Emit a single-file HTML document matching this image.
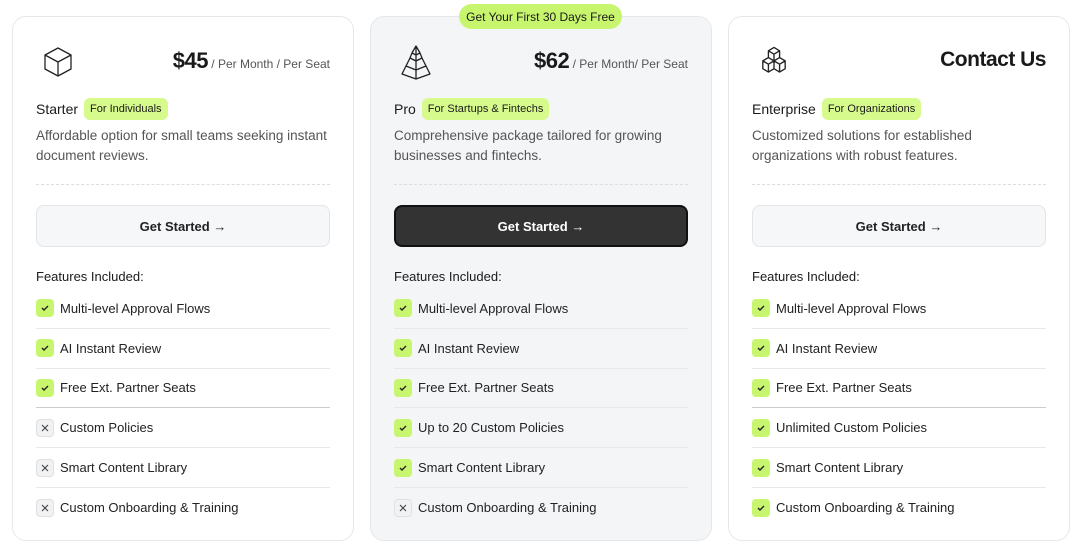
<!DOCTYPE html>
<html><head><meta charset="utf-8"><style>
*{box-sizing:border-box;margin:0;padding:0}
body{width:1070px;height:553px;background:#fff;font-family:"Liberation Sans",sans-serif;color:#1a1a1a;position:relative;overflow:hidden}
.card{position:absolute;top:16px;width:342px;height:525px;border:1px solid #e6e7ea;border-radius:14px;background:#fff;padding:0 23px}
.card.pro{background:#f4f5f7}
.icon{position:absolute;left:28px;top:28px;width:34px;height:34px}
.price{position:absolute;right:23px;top:31px;font-size:22px;font-weight:bold;letter-spacing:-0.5px}
.price span{font-size:12px;font-weight:normal;color:#555;letter-spacing:0}
.title{position:absolute;left:23px;top:81px;font-size:14px;display:flex;align-items:center;gap:6px}
.tag{background:#d6fb8c;border-radius:6px;font-size:11px;padding:5px 6px}
.desc{position:absolute;left:23px;top:109px;width:292px;font-size:13.5px;line-height:19.5px;color:#555}
.dash{position:absolute;left:23px;right:23px;top:167px;border-top:1px dashed #ddd}
.btn{position:absolute;left:23px;right:23px;top:188px;height:42px;border:1px solid #e3e4e7;border-radius:8px;background:#f6f7f9;font-size:13px;font-weight:bold;display:flex;align-items:center;justify-content:center;color:#222}
.pro .btn{background:#333;border:2px solid #111;color:#fff}
.feat{position:absolute;left:23px;top:252px;font-size:13px}
.list{position:absolute;left:23px;right:23px;top:272px}
.row{height:39.8px;display:flex;align-items:center;font-size:13px;border-bottom:1px solid #e8e8ea;color:#222}
.row:last-child{border-bottom:none}
.ck{width:18px;height:18px;border-radius:4px;background:#c8f56e;margin-right:6px;display:flex;align-items:center;justify-content:center}
.x{background:#f1f2f4;border:1px solid #e0e0e0}
.badge{position:absolute;left:459px;top:4px;width:163px;height:25px;border-radius:13px;background:#c8f56e;font-size:12px;display:flex;align-items:center;justify-content:center;z-index:2}
</style></head><body>
<div class="badge">Get Your First 30 Days Free</div>

<div class="card" style="left:12px">
<svg class="icon" viewBox="0 0 34 34" fill="none" stroke="#222" stroke-width="1.3" stroke-linejoin="round"><path d="M17 3L30 10V24L17 31L4 24V10Z M4 10L17 17L30 10 M17 17V31"/></svg>
<div class="price">$45<span> / Per Month / Per Seat</span></div>
<div class="title">Starter <span class="tag">For Individuals</span></div>
<div class="desc">Affordable option for small teams seeking instant document reviews.</div>
<div class="dash"></div>
<div class="btn">Get Started →</div>
<div class="feat">Features Included:</div>
<div class="list">
<div class="row"><span class="ck"><svg width="10" height="10" viewBox="0 0 10 10"><path d="M2 5l2 2 4-4" stroke="#222" stroke-width="1.4" fill="none"/></svg></span>Multi-level Approval Flows</div>
<div class="row"><span class="ck"><svg width="10" height="10" viewBox="0 0 10 10"><path d="M2 5l2 2 4-4" stroke="#222" stroke-width="1.4" fill="none"/></svg></span>AI Instant Review</div>
<div class="row" style="border-color:#ccc"><span class="ck"><svg width="10" height="10" viewBox="0 0 10 10"><path d="M2 5l2 2 4-4" stroke="#222" stroke-width="1.4" fill="none"/></svg></span>Free Ext. Partner Seats</div>
<div class="row"><span class="ck x"><svg width="10" height="10" viewBox="0 0 10 10"><path d="M2 2l6 6M8 2l-6 6" stroke="#444" stroke-width="1.1"/></svg></span>Custom Policies</div>
<div class="row"><span class="ck x"><svg width="10" height="10" viewBox="0 0 10 10"><path d="M2 2l6 6M8 2l-6 6" stroke="#444" stroke-width="1.1"/></svg></span>Smart Content Library</div>
<div class="row"><span class="ck x"><svg width="10" height="10" viewBox="0 0 10 10"><path d="M2 2l6 6M8 2l-6 6" stroke="#444" stroke-width="1.1"/></svg></span>Custom Onboarding &amp; Training</div>
</div></div>

<div class="card pro" style="left:370px">
<svg class="icon" viewBox="0 0 34 34" fill="none" stroke="#222" stroke-width="1.3" stroke-linejoin="round" style="top:24px;height:40px"><path d="M17 2L13 9L17 11L21 9Z M17 2V11 M13 9L11 14L17 17L23 14L21 9 M17 11V17 M11 14L7 22L17 26L27 22L23 14 M17 17V26 M7 22L3 30L17 35L31 30L27 22 M17 26V35"/></svg>
<div class="price">$62<span> / Per Month/ Per Seat</span></div>
<div class="title">Pro <span class="tag">For Startups &amp; Fintechs</span></div>
<div class="desc">Comprehensive package tailored for growing businesses and fintechs.</div>
<div class="dash"></div>
<div class="btn">Get Started →</div>
<div class="feat">Features Included:</div>
<div class="list">
<div class="row"><span class="ck"><svg width="10" height="10" viewBox="0 0 10 10"><path d="M2 5l2 2 4-4" stroke="#222" stroke-width="1.4" fill="none"/></svg></span>Multi-level Approval Flows</div>
<div class="row"><span class="ck"><svg width="10" height="10" viewBox="0 0 10 10"><path d="M2 5l2 2 4-4" stroke="#222" stroke-width="1.4" fill="none"/></svg></span>AI Instant Review</div>
<div class="row"><span class="ck"><svg width="10" height="10" viewBox="0 0 10 10"><path d="M2 5l2 2 4-4" stroke="#222" stroke-width="1.4" fill="none"/></svg></span>Free Ext. Partner Seats</div>
<div class="row"><span class="ck"><svg width="10" height="10" viewBox="0 0 10 10"><path d="M2 5l2 2 4-4" stroke="#222" stroke-width="1.4" fill="none"/></svg></span>Up to 20 Custom Policies</div>
<div class="row"><span class="ck"><svg width="10" height="10" viewBox="0 0 10 10"><path d="M2 5l2 2 4-4" stroke="#222" stroke-width="1.4" fill="none"/></svg></span>Smart Content Library</div>
<div class="row"><span class="ck x"><svg width="10" height="10" viewBox="0 0 10 10"><path d="M2 2l6 6M8 2l-6 6" stroke="#444" stroke-width="1.1"/></svg></span>Custom Onboarding &amp; Training</div>
</div></div>

<div class="card" style="left:728px">
<svg class="icon" viewBox="0 0 34 34" fill="none" stroke="#222" stroke-width="1.2" stroke-linejoin="round" style="left:26px;top:26px;width:38px;height:38px"><path d="M17 4L22 7V13L17 16L12 13V7Z M12 7L17 10L22 7 M17 10V16 M12 13L7 16V23L12 26L17 23V16 M7 16L12 19L17 16 M12 19V26 M22 13L27 16V23L22 26L17 23 M17 16L22 19L27 16 M22 19V26"/></svg>
<div class="price" style="font-weight:bold;font-size:21px">Contact Us</div>
<div class="title">Enterprise <span class="tag">For Organizations</span></div>
<div class="desc" style="width:240px">Customized solutions for established organizations with robust features.</div>
<div class="dash"></div>
<div class="btn">Get Started →</div>
<div class="feat">Features Included:</div>
<div class="list">
<div class="row"><span class="ck"><svg width="10" height="10" viewBox="0 0 10 10"><path d="M2 5l2 2 4-4" stroke="#222" stroke-width="1.4" fill="none"/></svg></span>Multi-level Approval Flows</div>
<div class="row"><span class="ck"><svg width="10" height="10" viewBox="0 0 10 10"><path d="M2 5l2 2 4-4" stroke="#222" stroke-width="1.4" fill="none"/></svg></span>AI Instant Review</div>
<div class="row" style="border-color:#ccc"><span class="ck"><svg width="10" height="10" viewBox="0 0 10 10"><path d="M2 5l2 2 4-4" stroke="#222" stroke-width="1.4" fill="none"/></svg></span>Free Ext. Partner Seats</div>
<div class="row"><span class="ck"><svg width="10" height="10" viewBox="0 0 10 10"><path d="M2 5l2 2 4-4" stroke="#222" stroke-width="1.4" fill="none"/></svg></span>Unlimited Custom Policies</div>
<div class="row"><span class="ck"><svg width="10" height="10" viewBox="0 0 10 10"><path d="M2 5l2 2 4-4" stroke="#222" stroke-width="1.4" fill="none"/></svg></span>Smart Content Library</div>
<div class="row"><span class="ck"><svg width="10" height="10" viewBox="0 0 10 10"><path d="M2 5l2 2 4-4" stroke="#222" stroke-width="1.4" fill="none"/></svg></span>Custom Onboarding &amp; Training</div>
</div></div>
</body></html>
